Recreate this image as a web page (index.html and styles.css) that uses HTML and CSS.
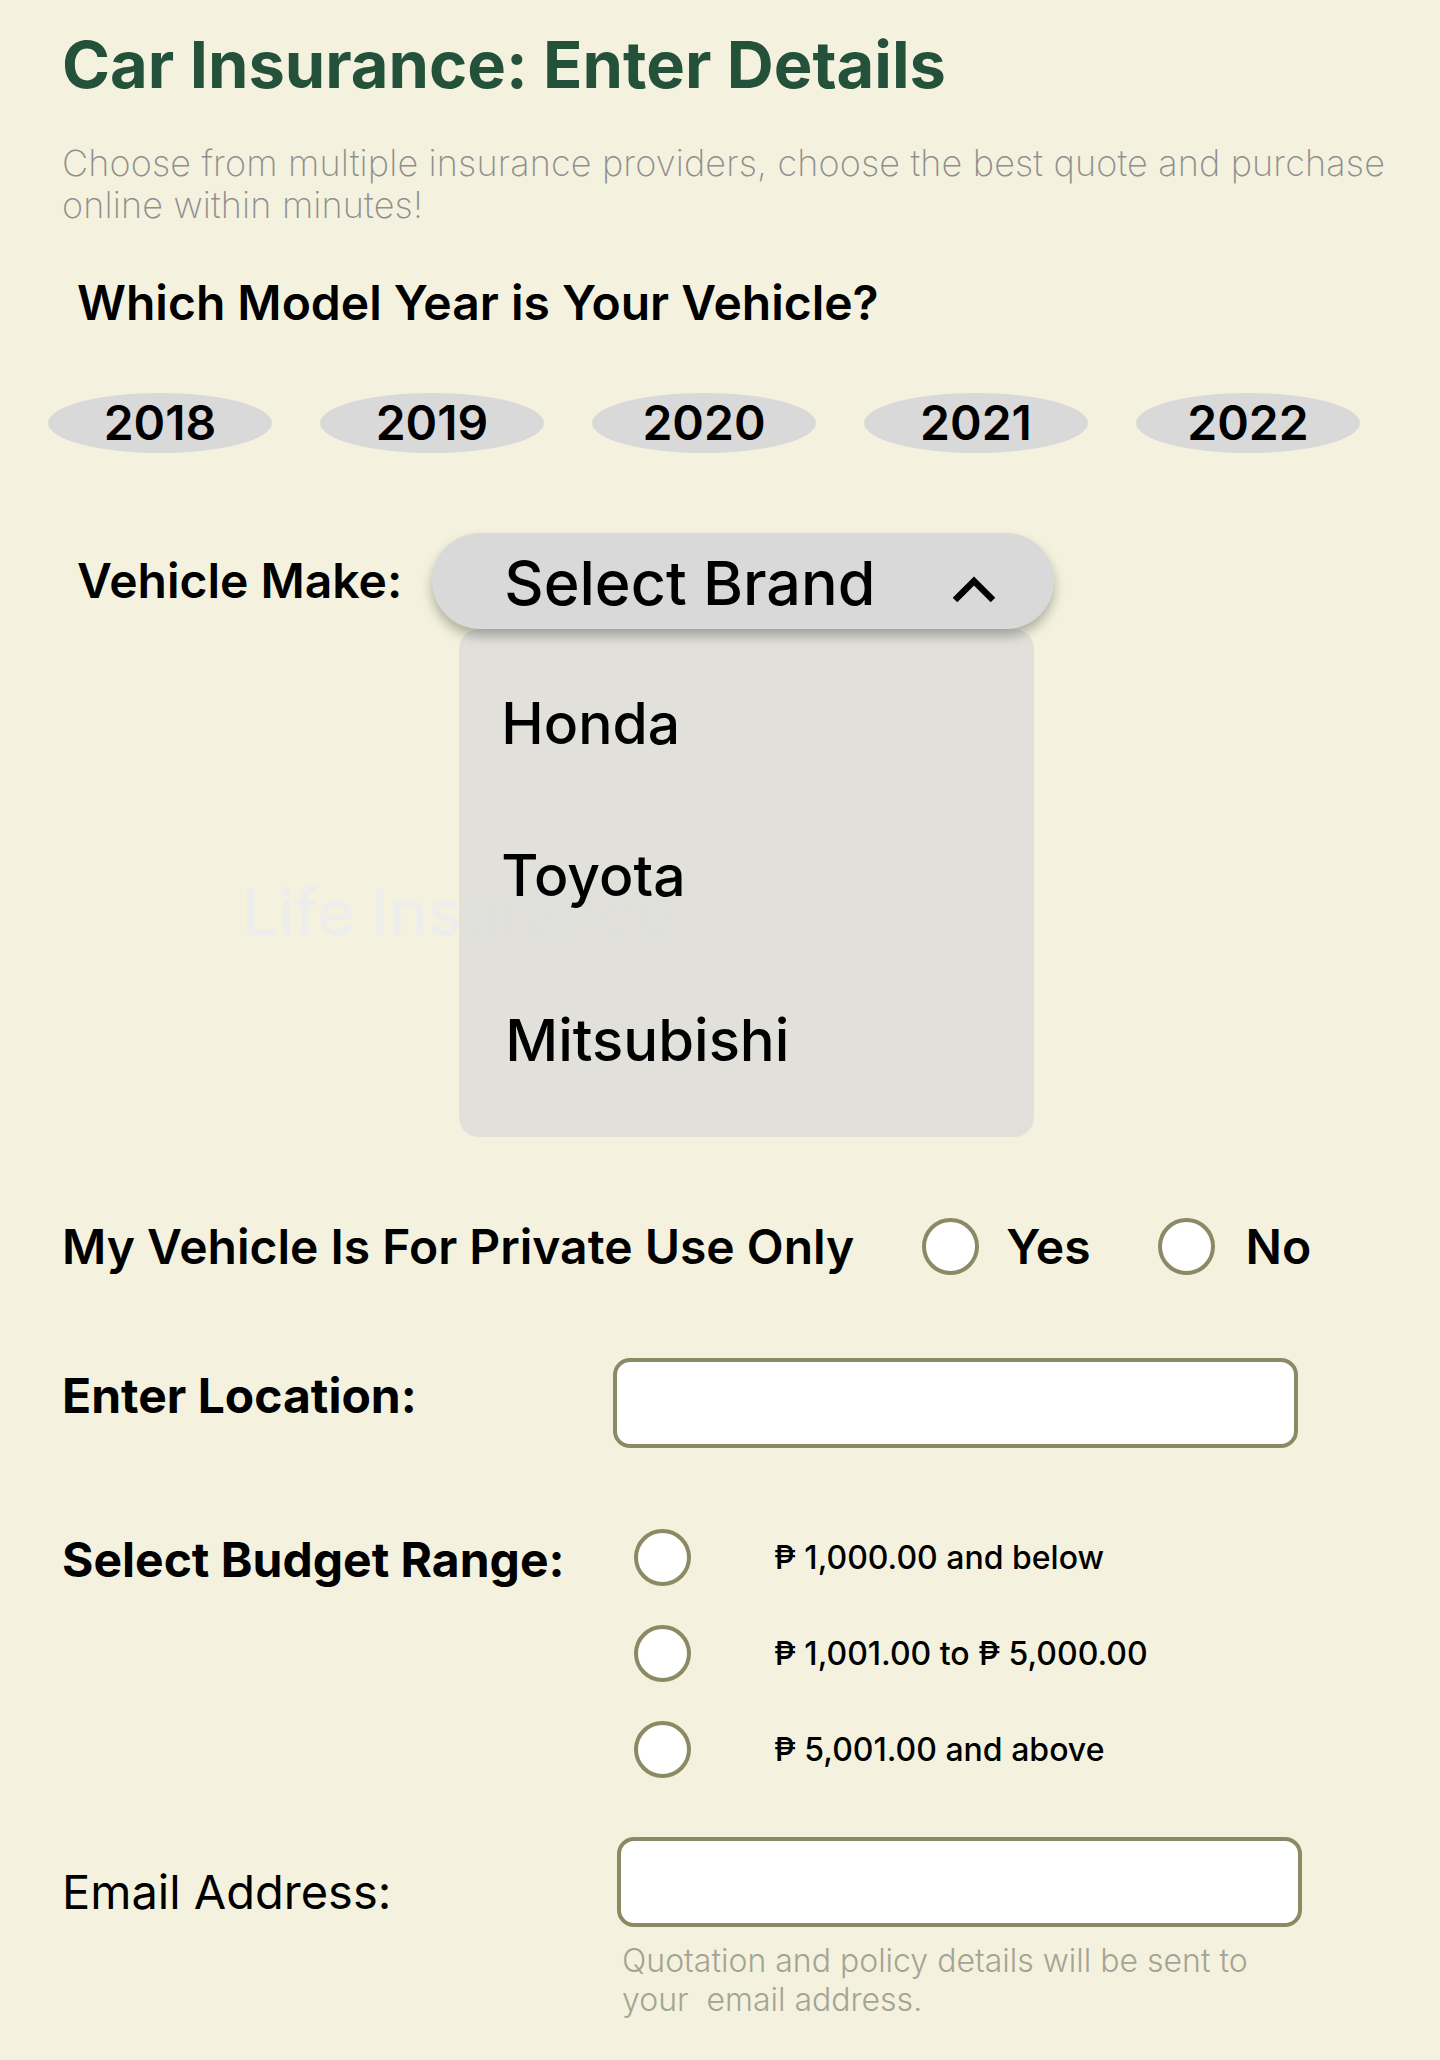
FILE: index.html
```html
<!DOCTYPE html>
<html lang="en">
<head>
<meta charset="utf-8">
<title>Car Insurance: Enter Details</title>
<link rel="stylesheet" href="styles.css">
</head>
<body>
<div class="page">
  <h1 class="title">Car Insurance: Enter Details</h1>
  <p class="subtitle">Choose from multiple insurance providers, choose the best quote and purchase online within minutes!</p>

  <h2 class="question">Which Model Year is Your Vehicle?</h2>
  <div class="years">
    <div class="year">2018</div>
    <div class="year">2019</div>
    <div class="year">2020</div>
    <div class="year">2021</div>
    <div class="year">2022</div>
  </div>

  <div class="make-row">
    <div class="make-label">Vehicle Make:</div>
    <div class="make-field">
      <div class="select">
        <span class="select-text">Select Brand</span>
        <svg class="chevron" width="46" height="32" viewBox="0 0 46 32"><polyline points="4,28 23,9 42,28" fill="none" stroke="#000" stroke-width="6.5"/></svg>
      </div>
      <ul class="menu">
        <li class="menu-item honda">Honda</li>
        <li class="menu-item toyota">Toyota</li>
        <li class="menu-item mitsubishi">Mitsubishi</li>
      </ul>
    </div>
  </div>
  <div class="ghost">Life Insurance</div>

  <div class="private-row">
    <div class="private-label">My Vehicle Is For Private Use Only</div>
    <div class="choice choice-yes"><span class="radio"></span><span class="choice-text">Yes</span></div>
    <div class="choice choice-no"><span class="radio"></span><span class="choice-text">No</span></div>
  </div>

  <div class="location-row">
    <div class="location-label">Enter Location:</div>
    <div class="text-input"></div>
  </div>

  <div class="budget-row">
    <div class="budget-label">Select Budget Range:</div>
    <div class="budget-options">
      <div class="budget-option"><span class="radio"></span><span class="budget-text">₱ 1,000.00 and below</span></div>
      <div class="budget-option"><span class="radio"></span><span class="budget-text">₱ 1,001.00 to ₱ 5,000.00</span></div>
      <div class="budget-option"><span class="radio"></span><span class="budget-text">₱ 5,001.00 and above</span></div>
    </div>
  </div>

  <div class="email-row">
    <div class="email-label">Email Address:</div>
    <div class="email-field">
      <div class="text-input"></div>
      <p class="helper">Quotation and policy details will be sent to your&nbsp; email address.</p>
    </div>
  </div>
</div>
</body>
</html>
```
FILE: styles.css
```css
html, body {
  margin: 0;
  padding: 0;
}
body {
  background: #f4f2de;
  font-family: Inter, "Noto Sans", sans-serif;
  color: #000;
}
.page {
  position: relative;
  padding: 26px 0 0 62px;
  min-height: 2034px;
}
.title {
  margin: 0;
  font-size: 65px;
  font-weight: 700;
  line-height: 77px;
  color: #23513a;
}
.subtitle {
  margin: 39px 0 0;
  max-width: 1350px;
  font-size: 36px;
  line-height: 42px;
  font-weight: 200;
  letter-spacing: 0.15px;
  color: #8f8f8f;
}
.question {
  margin: 47px 0 0 15px;
  font-size: 48px;
  font-weight: 600;
  line-height: normal;
}
.years {
  display: flex;
  gap: 48px;
  margin: 61px 0 0 -14px;
}
.year {
  width: 224px;
  height: 60px;
  border-radius: 50%;
  background: #d9d9d9;
  text-align: center;
  font-size: 48px;
  font-weight: 600;
  line-height: 60px;
}
.make-row {
  display: flex;
  align-items: flex-start;
  gap: 30px;
  margin: 80px 0 0 15px;
}
.make-label {
  font-size: 48px;
  font-weight: 600;
  line-height: 96px;
}
.make-field {
  display: flex;
  flex-direction: column;
}
.select {
  position: relative;
  z-index: 3;
  width: 622px;
  height: 96px;
  box-sizing: border-box;
  border-radius: 48px;
  background: #d9d9d9;
  box-shadow: 0 7px 12px rgba(0, 0, 0, 0.28);
  display: flex;
  align-items: center;
  justify-content: space-between;
  padding: 0 57px 0 72px;
}
.select-text {
  font-size: 61px;
  font-weight: 500;
  line-height: normal;
  margin-top: 4px;
}
.chevron {
  display: block;
  margin-top: 13px;
}
.menu {
  position: relative;
  z-index: 2;
  list-style: none;
  margin: 0 0 0 27px;
  padding: 60px 42px 62px;
  width: 575px;
  box-sizing: border-box;
  border-radius: 20px;
  background: rgba(217, 217, 217, 0.7);
}
.menu-item {
  font-size: 57px;
  font-weight: 500;
  line-height: normal;
}
.toyota {
  margin-top: 83px;
}
.mitsubishi {
  margin-top: 95px;
  padding-left: 4px;
  font-size: 58px;
}
.ghost {
  position: absolute;
  z-index: 1;
  left: 242px;
  top: 873px;
  font-size: 64px;
  font-weight: 500;
  line-height: normal;
  color: #ededeb;
  white-space: nowrap;
}
.private-row {
  display: flex;
  align-items: center;
  margin-top: 80px;
  font-size: 48px;
  font-weight: 600;
  line-height: normal;
}
.private-label {
  margin-right: 68px;
}
.choice {
  display: flex;
  align-items: center;
  gap: 27px;
}
.choice-no {
  margin-left: 67px;
  gap: 31px;
}
.radio {
  display: block;
  flex: none;
  width: 57px;
  height: 57px;
  box-sizing: border-box;
  border: 4px solid #8c8a64;
  border-radius: 50%;
  background: #fff;
}
.location-row {
  display: flex;
  align-items: flex-start;
  margin-top: 82px;
}
.location-label {
  width: 551px;
  margin-top: 8px;
  font-size: 48px;
  font-weight: 700;
  line-height: normal;
}
.text-input {
  width: 685px;
  height: 90px;
  box-sizing: border-box;
  border: 4px solid #8c8a64;
  border-radius: 17px;
  background: #fff;
}
.budget-row {
  display: flex;
  align-items: flex-start;
  margin-top: 81px;
}
.budget-label {
  width: 572px;
  margin-top: 1px;
  font-size: 48px;
  font-weight: 700;
  line-height: normal;
}
.budget-options {
  display: flex;
  flex-direction: column;
  gap: 39px;
}
.budget-option {
  display: flex;
  align-items: center;
  gap: 83px;
}
.budget-text {
  font-size: 32px;
  font-weight: 500;
  line-height: normal;
}
.email-row {
  display: flex;
  align-items: flex-start;
  margin-top: 59px;
}
.email-label {
  width: 555px;
  margin-top: 26px;
  font-size: 47px;
  font-weight: 400;
  line-height: normal;
}
.email-field {
  display: flex;
  flex-direction: column;
}
.helper {
  margin: 14px 0 0 5px;
  max-width: 660px;
  font-size: 32px;
  font-weight: 300;
  line-height: 39px;
  color: #a4a493;
}
```
